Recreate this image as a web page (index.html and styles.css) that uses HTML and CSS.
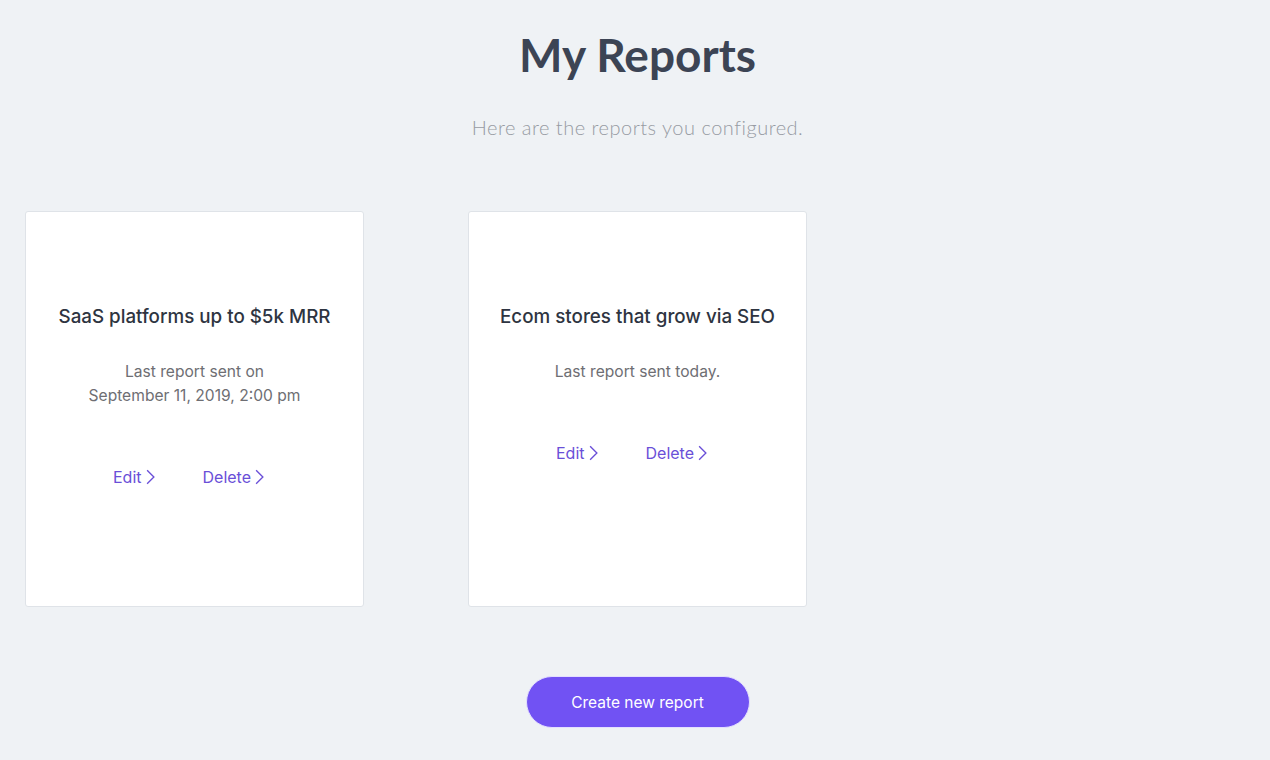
FILE: index.html
```html
<!DOCTYPE html>
<html>
<head>
	<title>My Reports</title>
	<link rel="stylesheet" href="styles.css">
</head>
<body>
	<div class="page">
		<h1 class="title">My Reports</h1>
		<p class="lead">Here are the reports you configured.</p>

		<div class="reports">
			<div class="report">
				<h2 class="report-name">SaaS platforms up to $5k MRR</h2>
				<p class="report-info">Last report sent on<br>September 11, 2019, 2:00 pm</p>
				<div class="actions">
					<a href="#" class="action">Edit<svg viewBox="0 0 8 14"><path d="M1 1l6 6-6 6"/></svg></a>
					<a href="#" class="action">Delete<svg viewBox="0 0 8 14"><path d="M1 1l6 6-6 6"/></svg></a>
				</div>
			</div>
			<div class="report">
				<h2 class="report-name">Ecom stores that grow via SEO</h2>
				<p class="report-info">Last report sent today.</p>
				<div class="actions">
					<a href="#" class="action">Edit<svg viewBox="0 0 8 14"><path d="M1 1l6 6-6 6"/></svg></a>
					<a href="#" class="action">Delete<svg viewBox="0 0 8 14"><path d="M1 1l6 6-6 6"/></svg></a>
				</div>
			</div>
		</div>

		<div class="bottom">
			<button class="create">Create new report</button>
		</div>
	</div>
</body>
</html>
```

FILE: styles.css
```css
body {
	margin: 0;
	padding: 0;
	background-color: #eff2f5;
	font-family: Inter, "Noto Sans", sans-serif;
}

.page {
	padding: 27px 20px 0 25px;
}

.title {
	margin: 0;
	text-align: center;
	font-family: Lato, sans-serif;
	font-weight: 700;
	font-size: 46px;
	line-height: 56px;
	color: #3c4454;
}

.lead {
	margin: 32px 0 0;
	text-align: center;
	font-family: Lato, sans-serif;
	font-weight: 300;
	font-size: 20px;
	letter-spacing: 0.5px;
	color: #979ba3;
}

.reports {
	display: flex;
	gap: 104px;
	margin-top: 72px;
}

.report {
	width: 339px;
	height: 396px;
	box-sizing: border-box;
	padding-top: 92px;
	background-color: #fff;
	border: 1px solid #dfe3e8;
	border-radius: 3px;
	text-align: center;
}

.report-name {
	margin: 0;
	font-size: 18.8px;
	font-weight: 500;
	line-height: 26px;
	color: #2e3441;
}

.report-info {
	margin: 30px 0 0;
	font-size: 15.6px;
	line-height: 24px;
	color: #6e6e73;
}

.actions {
	display: flex;
	justify-content: center;
	gap: 48px;
	margin-top: 59px;
	padding-right: 12px;
}

.action {
	display: flex;
	align-items: center;
	gap: 4px;
	font-size: 16px;
	color: #6a4fd8;
	text-decoration: none;
}

.action svg {
	width: 9px;
	height: 16px;
	fill: none;
	stroke: #6a4fd8;
	stroke-width: 1.2;
}

.bottom {
	display: flex;
	justify-content: center;
	margin-top: 69px;
}

.create {
	width: 224px;
	height: 52px;
	border: 1px solid #e4dfff;
	border-radius: 26px;
	background-color: #7152f3;
	color: #fff;
	font-family: Inter, sans-serif;
	font-size: 15.5px;
	cursor: pointer;
}
```
